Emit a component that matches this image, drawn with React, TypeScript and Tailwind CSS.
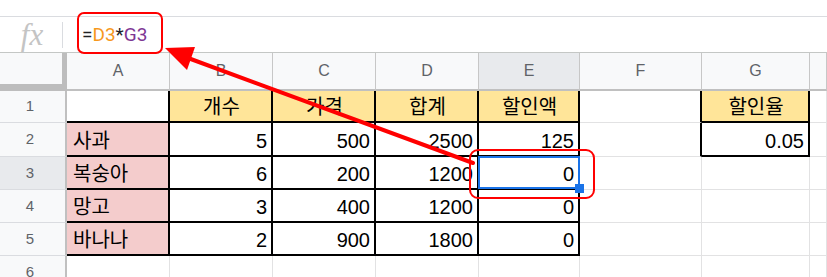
import React from "react";

type CellProps = {
  bg?: string;
  right?: boolean;
  bottom?: boolean;
  align?: "left" | "right" | "center";
  children?: React.ReactNode;
  extra?: React.ReactNode;
};

const Cell = ({ bg = "bg-white", right, bottom, align = "right", children, extra }: CellProps) => {
  const rb = right ? "border-r-2 border-r-black" : "border-r border-r-[#e2e2e3]";
  const bb = bottom ? "border-b-2 border-b-black" : "border-b border-b-[#e2e2e3]";
  const al = align === "left" ? "justify-start" : align === "center" ? "justify-center" : "justify-end";
  return (
    <div className={`relative box-border flex items-end pl-[6px] pr-[4px] pb-[2px] ${bg} ${rb} ${bb} ${al}`}>
      <span className="leading-[23px] text-[20px] text-black whitespace-nowrap">{children}</span>
      {extra}
    </div>
  );
};

const RowHead = ({ n, active }: { n: number; active?: boolean }) => (
  <div
    className={`box-border flex items-center justify-center pr-[5px] border-r-2 border-r-[#c0c0c0] border-b border-b-[#dadce0] text-[15px] text-[#5f6368] ${
      active ? "bg-[#e8eaed]" : "bg-[#f8f9fa]"
    }`}
  >
    {n}
  </div>
);

const ColHead = ({ label, active }: { label: string; active?: boolean }) => (
  <div
    className={`box-border flex items-center justify-center border-r border-r-[#c7c7c7] border-b-2 border-b-[#c0c0c0] text-[16px] text-[#5f6368] ${
      active ? "bg-[#e8eaed]" : "bg-[#f8f9fa]"
    }`}
  >
    {label}
  </div>
);

const rows = [
  { name: "사과", b: "5", c: "500", d: "2500", e: "125", g: "0.05" },
  { name: "복숭아", b: "6", c: "200", d: "1200", e: "0" },
  { name: "망고", b: "3", c: "400", d: "1200", e: "0" },
  { name: "바나나", b: "2", c: "900", d: "1800", e: "0" },
];

const heights = ["h-[34px]", "h-[33px]", "h-[33px]", "h-[33px]"];

export default function App() {
  return (
    <div
      className="relative w-[827px] h-[277px] overflow-hidden bg-white"
      style={{ fontFamily: '"Liberation Sans", "Noto Sans CJK KR", sans-serif' }}
    >
      {/* toolbar edge */}
      <div className="h-[17px] border-b border-[#dadce0]" />

      {/* formula bar */}
      <div className="flex h-[36px] items-center border-b border-[#c4c7c5]">
        <div className="flex w-[67px] items-center">
          <span
            className="w-[62px] pl-[2px] text-center text-[31px] italic leading-none text-[#c4c4c4]"
            style={{ fontFamily: '"Liberation Serif", serif' }}
          >
            fx
          </span>
          <div className="h-[26px] w-px bg-[#dadce0]" />
        </div>
        <div
          className="pl-[15px] pt-[2px] text-[19px] text-[#202124]"
          style={{ fontFamily: "Roboto, sans-serif" }}
        >
          =<span className="text-[#f7981d]">D3</span>*<span className="text-[#7e3794]">G3</span>
        </div>
      </div>

      {/* sheet grid */}
      <div className="grid grid-cols-[67px_103px_103px_103px_103px_101px_122px_108px_1fr]">
        {/* header row */}
        <div className="box-border h-[38px] bg-[#f8f9fa] border-r-[5px] border-b-[7px] border-[#bdbdbd]" />
        <ColHead label="A" />
        <ColHead label="B" />
        <ColHead label="C" />
        <ColHead label="D" />
        <ColHead label="E" active />
        <ColHead label="F" />
        <ColHead label="G" />
        <ColHead label="" />

        {/* row 1 */}
        <div className="h-[32px] grid">
          <RowHead n={1} />
        </div>
        <Cell right bottom />
        <Cell bg="bg-[#ffe599]" right bottom align="center">개수</Cell>
        <Cell bg="bg-[#ffe599]" right bottom align="center">가격</Cell>
        <Cell bg="bg-[#ffe599]" right bottom align="center">합계</Cell>
        <Cell bg="bg-[#ffe599]" right bottom align="center">할인액</Cell>
        <Cell right />
        <Cell bg="bg-[#ffe599]" right bottom align="center">할인율</Cell>
        <Cell />

        {rows.map((r, i) => (
          <React.Fragment key={r.name}>
            <div className={`${heights[i]} grid`}>
              <RowHead n={i + 2} active={i === 1} />
            </div>
            <Cell bg="bg-[#f4cccc]" right bottom align="left">{r.name}</Cell>
            <Cell right bottom>{r.b}</Cell>
            <Cell right bottom>{r.c}</Cell>
            <Cell right bottom>{r.d}</Cell>
            <Cell
              right
              bottom
              extra={
                i === 1 ? (
                  <>
                    <div className="pointer-events-none absolute -left-[1px] -top-[1px] -right-[2px] -bottom-[1px] z-10 border-2 border-[#1a73e8]" />
                    <div className="absolute -right-[6px] -bottom-[5px] z-10 h-[9px] w-[9px] bg-[#1a73e8]" />
                  </>
                ) : null
              }
            >
              {r.e}
            </Cell>
            <Cell right={i === 0} />
            {i === 0 ? <Cell right bottom>{r.g}</Cell> : <Cell />}
            <Cell />
          </React.Fragment>
        ))}

        {/* row 6 */}
        <div className="h-[33px] grid">
          <RowHead n={6} />
        </div>
        <Cell />
        <Cell />
        <Cell />
        <Cell />
        <Cell />
        <Cell />
        <Cell />
        <Cell />
      </div>

      {/* annotations */}
      <div className="pointer-events-none absolute left-[77px] top-[12px] h-[42px] w-[86px] rounded-[7px] border-2 border-[#ff0000]" />
      <div className="pointer-events-none absolute left-[469px] top-[149px] h-[50px] w-[126px] rounded-[9px] border-2 border-[#ff0000]" />
      <svg className="pointer-events-none absolute left-0 top-0" width="827" height="277">
        <line x1="473" y1="163" x2="188" y2="58" stroke="#ff0000" strokeWidth="4" strokeLinecap="round" />
        <polygon points="165,48 195,47 187,70" fill="#ff0000" />
      </svg>
    </div>
  );
}
